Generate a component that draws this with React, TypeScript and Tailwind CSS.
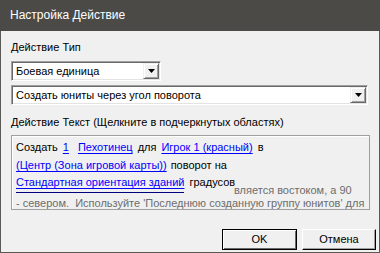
import React from 'react';

const Arrow: React.FC = () => (
  <svg width="7" height="4" viewBox="0 0 7 4">
    <path d="M0 0h7L3.5 4z" fill="#000" />
  </svg>
);

const Combo: React.FC<{ value: string; width: string }> = ({ value, width }) => (
  <div
    className={`${width} h-[20px] flex items-stretch bg-white border border-t-[#a0a0a0] border-l-[#a0a0a0] border-r-white border-b-white shadow-[inset_1px_1px_0_#696969,inset_-1px_-1px_0_#e3e3e3] p-[1px]`}
  >
    <div className="flex-1 flex items-center pl-[3px] pt-[1px] text-black truncate">{value}</div>
    <div className="w-[16px] flex items-center justify-center bg-[#f0f0f0] border border-t-[#f0f0f0] border-l-[#f0f0f0] border-r-[#696969] border-b-[#696969] shadow-[inset_1px_1px_0_#fff,inset_-1px_-1px_0_#a0a0a0]">
      <Arrow />
    </div>
  </div>
);

const Link: React.FC<{ children: React.ReactNode }> = ({ children }) => (
  <span className="text-[#0000ff] underline underline-offset-[2px]">{children}</span>
);

export default function App() {
  return (
    <div
      className="w-[380px] h-[253px] bg-[#5a5956] flex flex-col text-[11px] leading-[13px] text-black"
      style={{ fontFamily: '"Liberation Sans", Arial, sans-serif' }}
    >
      {/* Title bar */}
      <div className="h-[31px] flex items-center pl-[10px] bg-[#4b4a47] text-white text-[12px]">
        Настройка Действие
      </div>

      {/* Body */}
      <div className="flex-1 mx-[1px] mb-[1px] bg-[#f0f0f0] flex flex-col pl-[10px]">
        <div className="mt-[10px]">Действие Тип</div>
        <div className="mt-[7px]">
          <Combo value="Боевая единица" width="w-[150px]" />
        </div>
        <div className="mt-[4px]">
          <Combo value="Создать юниты через угол поворота" width="w-[357px]" />
        </div>

        <div className="mt-[11px]">Действие Текст (Щелкните в подчеркнутых областях)</div>

        {/* Action text */}
        <div className="mt-[6px] w-[359px] h-[75px] overflow-hidden border border-[#a0a0a0] shadow-[inset_1px_1px_0_#fff] bg-[#f0f0f0] pl-[4px] pt-[2px] leading-[18px]">
          <div className="flex gap-[5px]">
            <span>Создать</span>
            <Link>1</Link>
            <span className="ml-[4px]"><Link>Пехотинец</Link></span>
            <span>для</span>
            <Link>Игрок 1 (красный)</Link>
            <span>в</span>
          </div>
          <div className="flex gap-[4px]">
            <Link>(Центр (Зона игровой карты))</Link>
            <span>поворот на</span>
          </div>
          <div className="flex gap-[5px]">
            <span className="text-[#0000ff] underline underline-offset-[2px] border-b border-[#00007f] leading-[17px] h-[19px]">
              Стандартная ориентация зданий
            </span>
            <span className="leading-[16px]">градусов</span>
          </div>
          <div className="-mt-[9px] text-[#6d6d6d] leading-[13px]">
            <div className="pl-[218px]">вляется востоком, а 90</div>
            <div>- севером.&nbsp; Используйте 'Последнюю созданную группу юнитов' для</div>
          </div>
        </div>

        {/* Buttons */}
        <div className="mt-[19px] flex justify-end gap-[5px] pr-[3px]">
          <button className="w-[75px] h-[21px] bg-[#f0f0f0] border border-[#000] shadow-[inset_1px_1px_0_#fff,inset_-1px_-1px_0_#696969] text-[11px]">
            OK
          </button>
          <button className="w-[74px] h-[21px] bg-[#f0f0f0] border border-t-white border-l-white border-r-[#000] border-b-[#000] shadow-[inset_-1px_-1px_0_#a0a0a0] text-[11px]">
            Отмена
          </button>
        </div>
      </div>
    </div>
  );
}
